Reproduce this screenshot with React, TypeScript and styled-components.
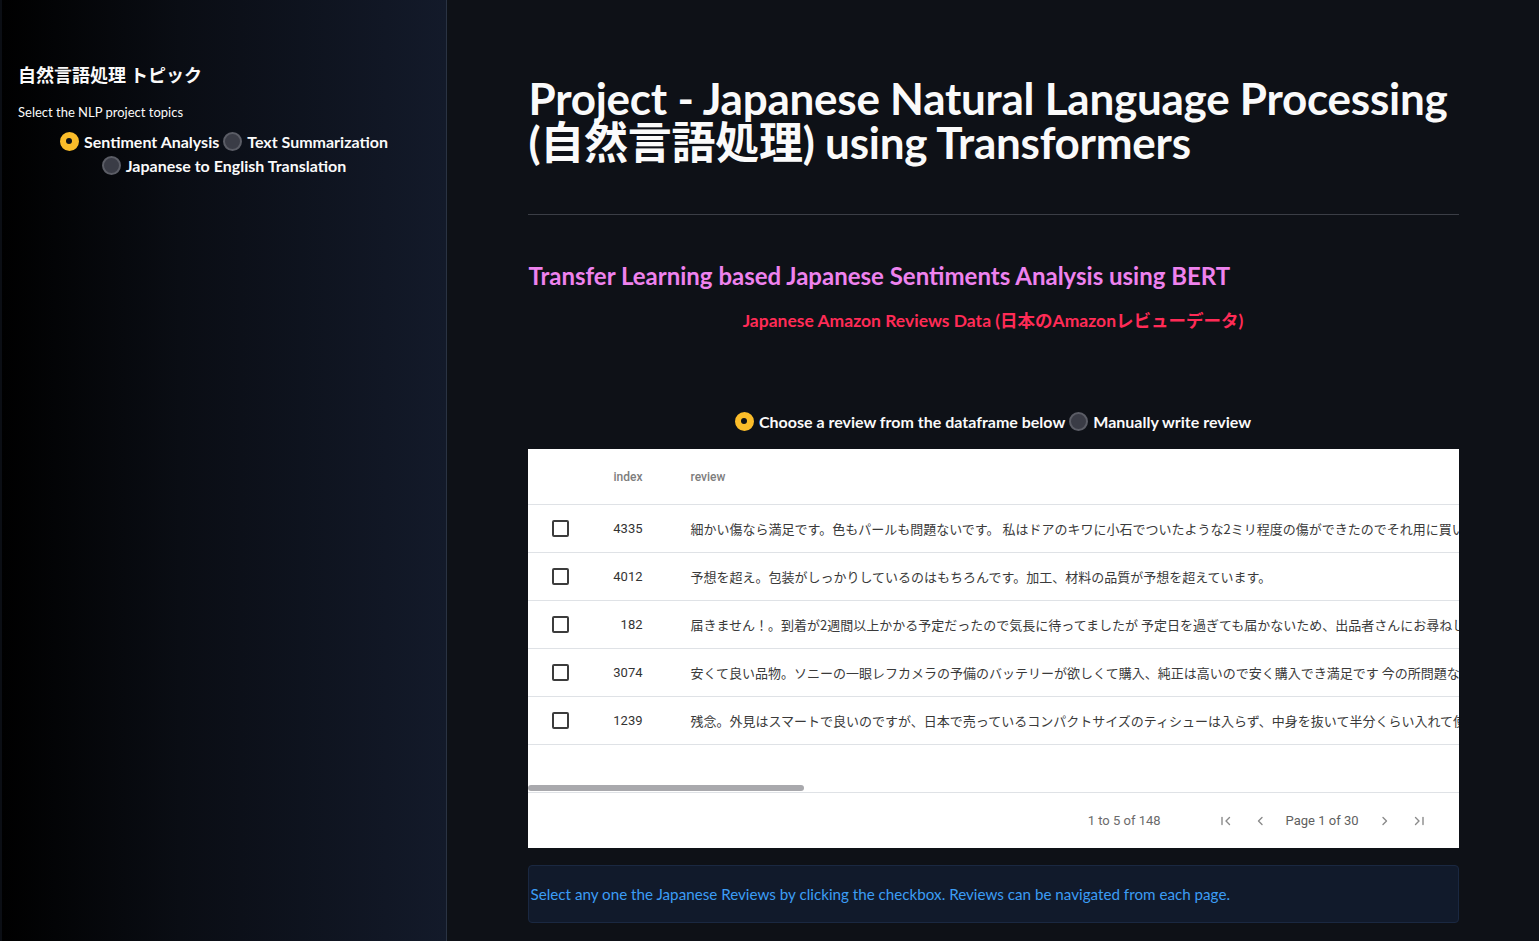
import React from 'react';
import styled, { createGlobalStyle } from 'styled-components';

const GlobalStyle = createGlobalStyle`
    html, body {
        margin: 0;
        padding: 0;
        background: #0e1117;
    }
    * {
        box-sizing: border-box;
    }
`;

const FONT = `Lato, "Noto Sans CJK JP", sans-serif`;
const JP_FONT = `"Noto Sans CJK JP", sans-serif`;
const GRID_FONT = `Roboto, "Noto Sans CJK JP", sans-serif`;

const reviews = [
    {
        index: 4335,
        text: '細かい傷なら満足です。色もパールも問題ないです。 私はドアのキワに小石でついたような2ミリ程度の傷ができたのでそれ用に買いました。',
    },
    {
        index: 4012,
        text: '予想を超え。包装がしっかりしているのはもちろんです。加工、材料の品質が予想を超えています。',
    },
    {
        index: 182,
        text: '届きません！。到着が2週間以上かかる予定だったので気長に待ってましたが 予定日を過ぎても届かないため、出品者さんにお尋ねしたところ返信がありません。',
    },
    {
        index: 3074,
        text: '安くて良い品物。ソニーの一眼レフカメラの予備のバッテリーが欲しくて購入、純正は高いので安く購入でき満足です 今の所問題なく使えています。',
    },
    {
        index: 1239,
        text: '残念。外見はスマートで良いのですが、日本で売っているコンパクトサイズのティシューは入らず、中身を抜いて半分くらい入れて使っています。',
    },
];

const Radio: React.FunctionComponent<{ active?: boolean; label: string }> = ({ active, label }) => (
    <RadioOption>
        <RadioDot $active={!!active} />
        <RadioLabel>{label}</RadioLabel>
    </RadioOption>
);

const NavIcon: React.FunctionComponent<{ kind: 'first' | 'prev' | 'next' | 'last' }> = ({ kind }) => (
    <svg width="16" height="16" viewBox="0 0 16 16" fill="none" stroke="#8a8a8a" strokeWidth="1.4" strokeLinecap="round" strokeLinejoin="round">
        {kind === 'first' && (
            <>
                <path d="M4 4.5v7" />
                <path d="M11.5 4.5 8 8l3.5 3.5" />
            </>
        )}
        {kind === 'prev' && <path d="M10 4.5 6.5 8l3.5 3.5" />}
        {kind === 'next' && <path d="M6 4.5 9.5 8 6 11.5" />}
        {kind === 'last' && (
            <>
                <path d="M4.5 4.5 8 8l-3.5 3.5" />
                <path d="M12 4.5v7" />
            </>
        )}
    </svg>
);

const App: React.FunctionComponent = () => {
    return (
        <Page>
            <GlobalStyle />
            <Sidebar>
                <SideTitle>自然言語処理 トピック</SideTitle>
                <SideLabel>Select the NLP project topics</SideLabel>
                <RadioGroup>
                    <Radio active label="Sentiment Analysis" />
                    <Radio label="Text Summarization" />
                    <Radio label="Japanese to English Translation" />
                </RadioGroup>
            </Sidebar>

            <Main>
                <Content>
                    <Title>
                        Project - Japanese Natural Language Processing (自然言語処理) using Transformers
                    </Title>
                    <Divider />
                    <SubTitle>Transfer Learning based Japanese Sentiments Analysis using BERT</SubTitle>
                    <DataTitle>Japanese Amazon Reviews Data (日本のAmazonレビューデータ)</DataTitle>

                    <ChoiceRow>
                        <Radio active label="Choose a review from the dataframe below" />
                        <Radio label="Manually write review" />
                    </ChoiceRow>

                    <Grid>
                        <HeaderRow>
                            <span />
                            <IndexCell $header>index</IndexCell>
                            <ReviewCell $header>review</ReviewCell>
                        </HeaderRow>
                        {reviews.map(r => (
                            <Row key={r.index}>
                                <CheckCell>
                                    <Checkbox />
                                </CheckCell>
                                <IndexCell>{r.index}</IndexCell>
                                <ReviewCell>{r.text}</ReviewCell>
                            </Row>
                        ))}
                        <ScrollArea>
                            <ScrollThumb />
                        </ScrollArea>
                        <Footer>
                            <PageSummary>1 to 5 of 148</PageSummary>
                            <NavButton>
                                <NavIcon kind="first" />
                            </NavButton>
                            <NavButton>
                                <NavIcon kind="prev" />
                            </NavButton>
                            <PageText>Page 1 of 30</PageText>
                            <NavButton>
                                <NavIcon kind="next" />
                            </NavButton>
                            <NavButton>
                                <NavIcon kind="last" />
                            </NavButton>
                        </Footer>
                    </Grid>

                    <InfoBox>
                        Select any one the Japanese Reviews by clicking the checkbox. Reviews can be navigated from each page.
                    </InfoBox>
                </Content>
            </Main>
        </Page>
    );
};

export default App;

const Page = styled.div`
    display: flex;
    min-height: 100vh;
    background: #0e1117;
    font-family: ${FONT};
    color: #fafafa;
`;

const Sidebar = styled.aside`
    width: 447px;
    flex-shrink: 0;
    min-height: 100vh;
    padding: 60px 16px 0 16px;
    background: linear-gradient(90deg, #000000 0%, #0a0d14 40%, #131a2a 100%);
    border-left: 2px solid #0b0e14;
    border-right: 1px solid #2a3343;
`;

const SideTitle = styled.h2`
    margin: 0;
    font-family: ${JP_FONT};
    font-size: 18px;
    line-height: 28px;
    font-weight: 700;
    color: #fafafa;
`;

const SideLabel = styled.div`
    margin-top: 15px;
    font-size: 13px;
    line-height: 18px;
    color: #fafafa;
`;

const RadioGroup = styled.div`
    display: flex;
    flex-wrap: wrap;
    justify-content: center;
    column-gap: 4px;
    margin-top: 8px;
`;

const RadioOption = styled.label`
    display: flex;
    align-items: center;
    gap: 5px;
    height: 24px;
`;

const RadioDot = styled.span<{ $active: boolean }>`
    width: 19px;
    height: 19px;
    border-radius: 50%;
    flex-shrink: 0;
    background: ${props => (props.$active ? '#fbbd2a' : '#3a3c46')};
    border: 2px solid ${props => (props.$active ? '#fbbd2a' : '#5b5d66')};
    display: flex;
    align-items: center;
    justify-content: center;

    &::after {
        content: '';
        display: ${props => (props.$active ? 'block' : 'none')};
        width: 6px;
        height: 6px;
        border-radius: 50%;
        background: #0e1117;
    }
`;

const RadioLabel = styled.span`
    font-size: 16px;
    font-weight: 700;
    color: #fafafa;
    white-space: nowrap;
`;

const Main = styled.main`
    flex: 1;
    display: flex;
    justify-content: center;
`;

const Content = styled.div`
    width: 931px;
    padding-top: 76px;
`;

const Title = styled.h1`
    margin: 0;
    font-size: 44px;
    line-height: 44px;
    font-weight: 700;
    letter-spacing: -0.25px;
    color: #fafafa;
    padding-left: 1px;
`;

const Divider = styled.hr`
    margin: 50px 0 0 0;
    border: none;
    border-top: 1px solid #3b3e46;
`;

const SubTitle = styled.h3`
    margin: 45px 0 0 0;
    font-size: 24px;
    line-height: 32px;
    font-weight: 700;
    color: #ee82ee;
    padding-left: 1px;
`;

const DataTitle = styled.div`
    margin-top: 16px;
    text-align: center;
    font-size: 17.5px;
    line-height: 26px;
    font-weight: 700;
    color: #ff2b56;
`;

const ChoiceRow = styled.div`
    display: flex;
    justify-content: center;
    column-gap: 4px;
    margin-top: 75px;
    margin-bottom: 16px;
`;

const Grid = styled.div`
    background: #ffffff;
    overflow: hidden;
    font-family: ${GRID_FONT};
`;

const HeaderRow = styled.div`
    display: grid;
    grid-template-columns: 66px 66px 1fr;
    align-items: center;
    height: 56px;
    border-bottom: 1px solid #dfe2e6;
`;

const Row = styled(HeaderRow)`
    height: 48px;
`;

const CheckCell = styled.div`
    display: flex;
    justify-content: center;
`;

const Checkbox = styled.span`
    width: 17px;
    height: 17px;
    border: 2px solid #3c3c3c;
    border-radius: 2px;
    background: #fff;
`;

const IndexCell = styled.div<{ $header?: boolean }>`
    text-align: right;
    padding-right: 17px;
    font-size: ${props => (props.$header ? '12px' : '13px')};
    font-weight: ${props => (props.$header ? 500 : 400)};
    color: ${props => (props.$header ? '#7d7d7d' : '#333333')};
`;

const ReviewCell = styled.div<{ $header?: boolean }>`
    padding-left: 31px;
    white-space: nowrap;
    overflow: hidden;
    font-family: ${props => (props.$header ? GRID_FONT : JP_FONT)};
    font-size: ${props => (props.$header ? '12px' : '13px')};
    font-weight: ${props => (props.$header ? 500 : 400)};
    color: ${props => (props.$header ? '#7d7d7d' : '#3a3a3a')};
`;

const ScrollArea = styled.div`
    height: 48px;
    display: flex;
    align-items: flex-end;
    padding-bottom: 1px;
    border-bottom: 1px solid #dfe2e6;
`;

const ScrollThumb = styled.div`
    width: 276px;
    height: 6px;
    border-radius: 3px;
    background: #a9a9ad;
`;

const Footer = styled.div`
    height: 55px;
    display: flex;
    align-items: center;
    justify-content: flex-end;
    gap: 18px;
    padding-right: 32px;
    font-size: 13px;
    color: #6b6b6b;
`;

const PageSummary = styled.span`
    margin-right: 39px;
`;

const NavButton = styled.span`
    display: flex;
    width: 16px;
    height: 16px;
`;

const PageText = styled.span`
    color: #5f5f5f;
`;

const InfoBox = styled.div`
    margin-top: 17px;
    padding: 16px 2px;
    border: 1px solid #1a2841;
    border-radius: 4px;
    background: #111a2b;
    color: #3c9df5;
    font-size: 15.2px;
    line-height: 24px;
`;
